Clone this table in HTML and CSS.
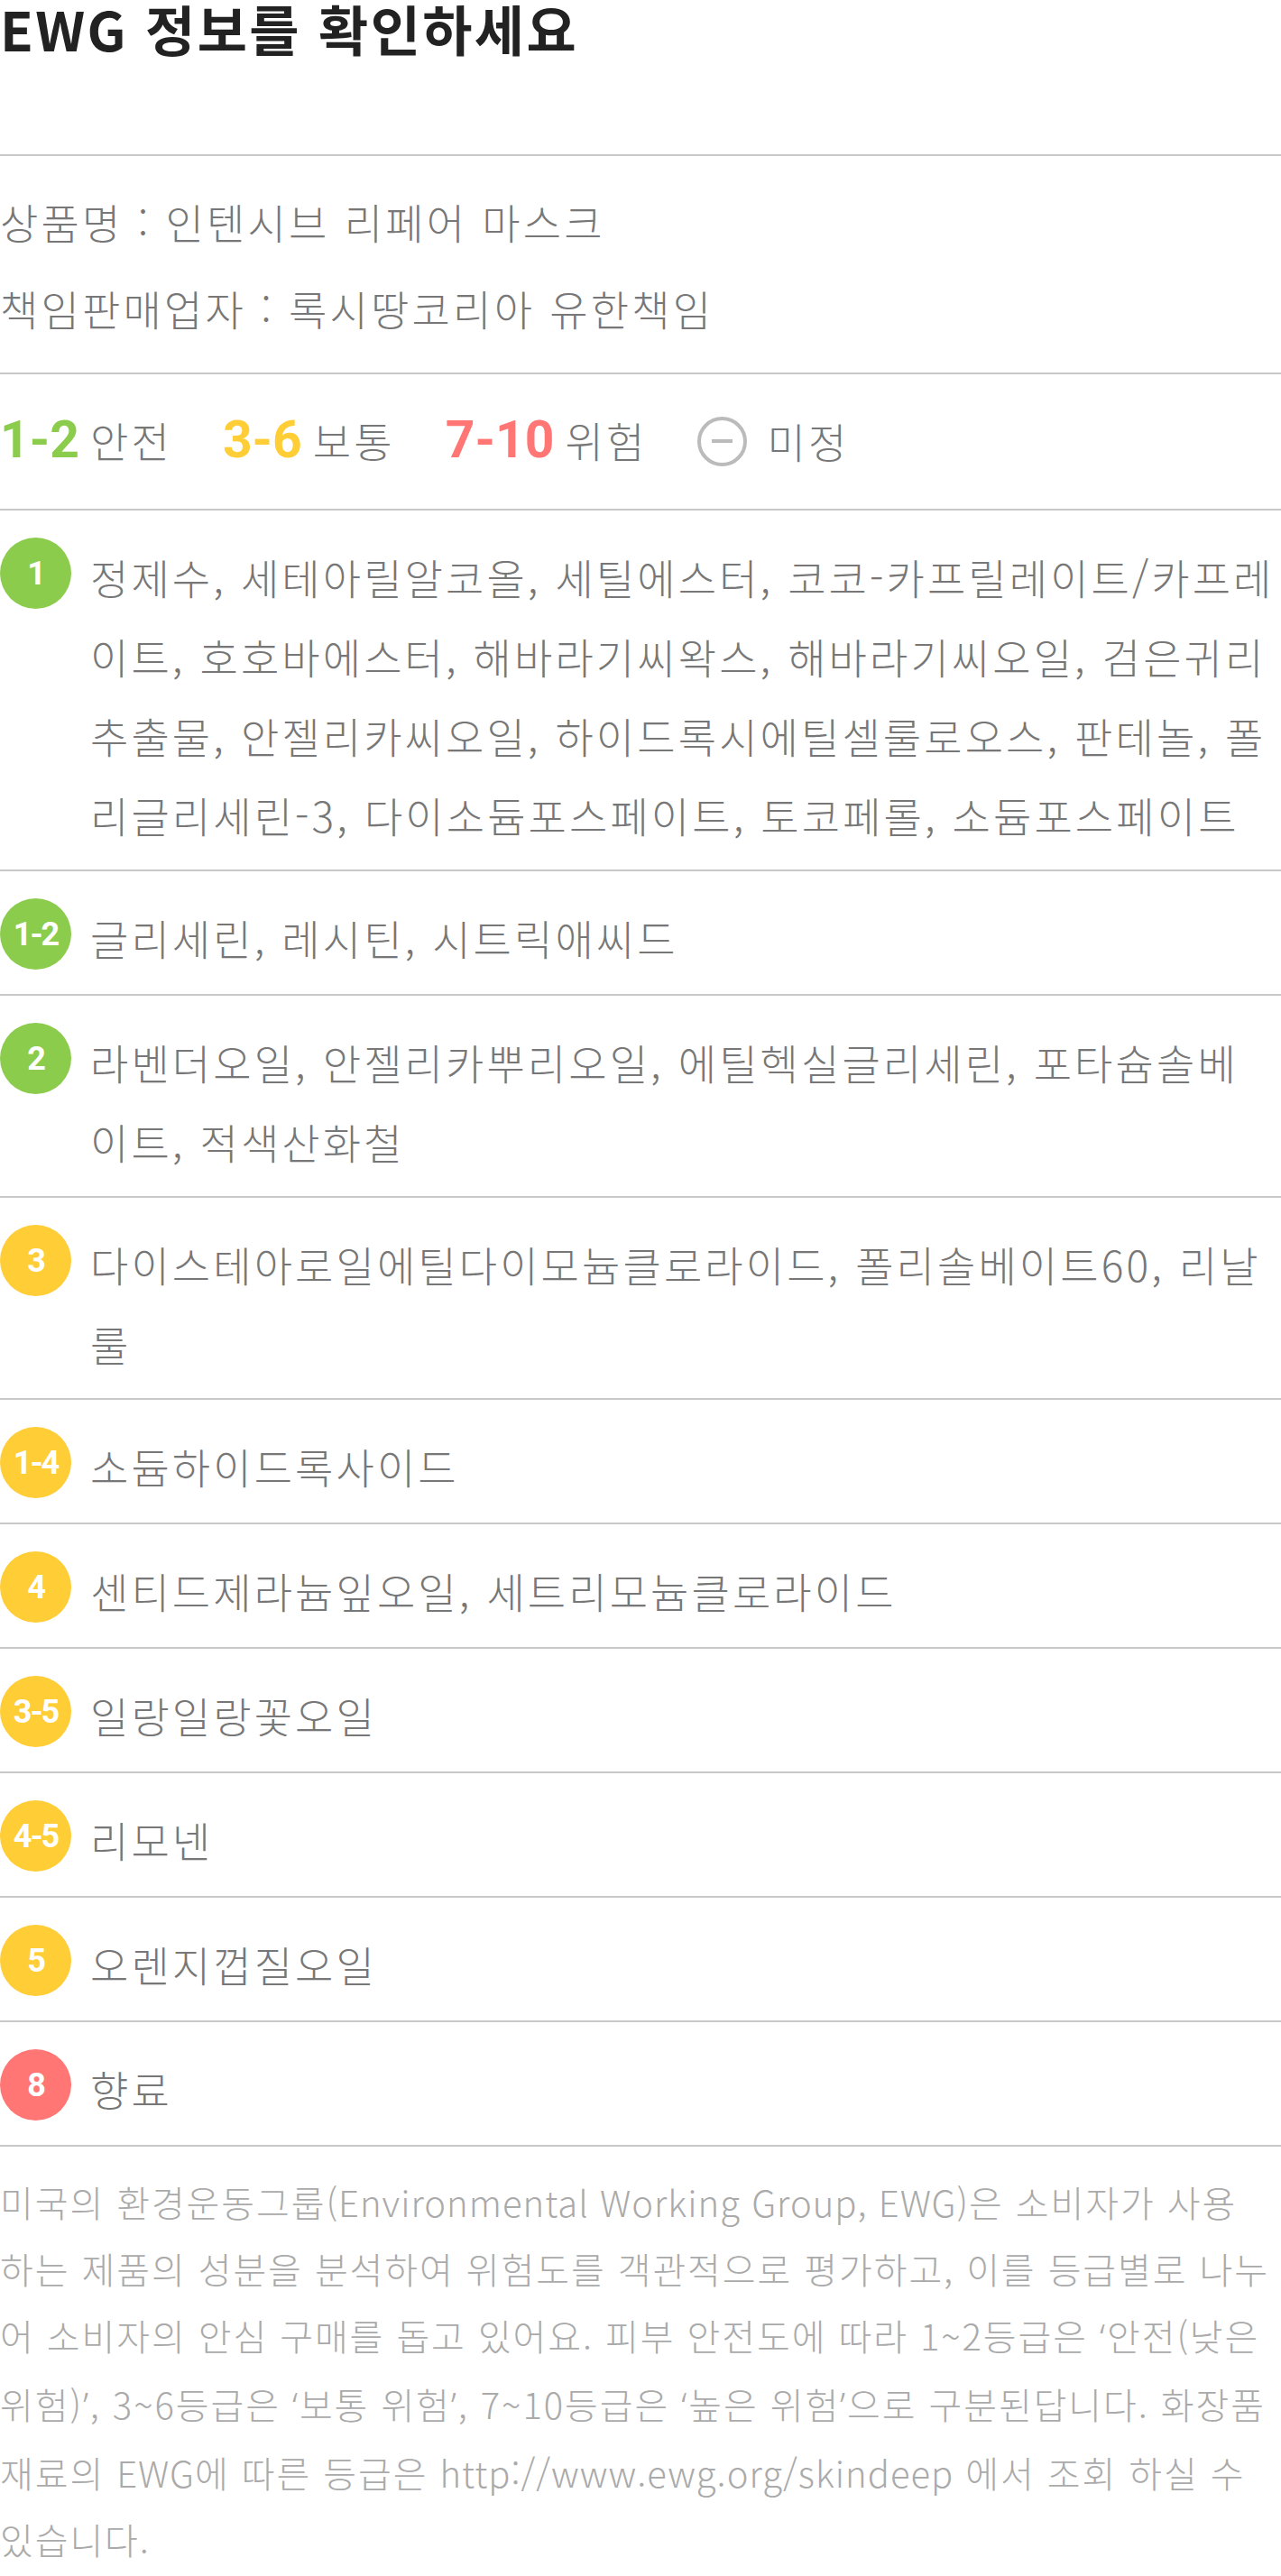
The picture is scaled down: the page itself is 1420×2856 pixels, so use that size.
FILE: index.html
```html
<!DOCTYPE html>
<html lang="ko">
<head>
  <meta charset="UTF-8">
  <meta name="viewport" content="width=device-width, initial-scale=1.0">
  <title>EWG 정보</title>
  <link rel="stylesheet" href="styles.css">
</head>
<body>
  <div class="ewg">
    <!-- 제목 -->
    <div class="ewg-header">
      <h1>EWG 정보를 확인하세요</h1>
    </div>

    <!-- 상품 정보 -->
    <div class="product-info">
      <p>상품명 : 인텐시브 리페어 마스크</p>
      <p>책임판매업자 : 록시땅코리아 유한책임</p>
    </div>

    <!-- 등급 안내 -->
    <div class="legend">
      <div class="legend-item"><span class="legend-num green">1-2</span><span>안전</span></div>
      <div class="legend-item"><span class="legend-num yellow">3-6</span><span>보통</span></div>
      <div class="legend-item"><span class="legend-num red">7-10</span><span>위험</span></div>
      <div class="legend-item"><span class="legend-none"></span><span>미정</span></div>
    </div>

    <!-- 성분 목록 (줄바꿈은 화면 그대로) -->
    <ul class="ingredients">
      <li class="ingredient">
        <span class="badge green">1</span>
        <p>정제수, 세테아릴알코올, 세틸에스터, 코코-카프릴레이트/카프레<br>이트, 호호바에스터, 해바라기씨왁스, 해바라기씨오일, 검은귀리<br>추출물, 안젤리카씨오일, 하이드록시에틸셀룰로오스, 판테놀, 폴<br>리글리세린-3, 다이소듐포스페이트, 토코페롤, 소듐포스페이트</p>
      </li>
      <li class="ingredient">
        <span class="badge green">1-2</span>
        <p>글리세린, 레시틴, 시트릭애씨드</p>
      </li>
      <li class="ingredient">
        <span class="badge green">2</span>
        <p>라벤더오일, 안젤리카뿌리오일, 에틸헥실글리세린, 포타슘솔베<br>이트, 적색산화철</p>
      </li>
      <li class="ingredient">
        <span class="badge yellow">3</span>
        <p>다이스테아로일에틸다이모늄클로라이드, 폴리솔베이트60, 리날<br>룰</p>
      </li>
      <li class="ingredient">
        <span class="badge yellow">1-4</span>
        <p>소듐하이드록사이드</p>
      </li>
      <li class="ingredient">
        <span class="badge yellow">4</span>
        <p>센티드제라늄잎오일, 세트리모늄클로라이드</p>
      </li>
      <li class="ingredient">
        <span class="badge yellow">3-5</span>
        <p>일랑일랑꽃오일</p>
      </li>
      <li class="ingredient">
        <span class="badge yellow">4-5</span>
        <p>리모넨</p>
      </li>
      <li class="ingredient">
        <span class="badge yellow">5</span>
        <p>오렌지껍질오일</p>
      </li>
      <li class="ingredient">
        <span class="badge red">8</span>
        <p>향료</p>
      </li>
    </ul>

    <!-- 안내 문구 -->
    <p class="ewg-note">미국의 환경운동그룹<span class="en">(Environmental Working Group, EWG)</span>은 소비자가 사용<br>하는 제품의 성분을 분석하여 위험도를 객관적으로 평가하고, 이를 등급별로 나누<br>어 소비자의 안심 구매를 돕고 있어요. 피부 안전도에 따라 1~2등급은 <span class="q">‘</span>안전(낮은<br>위험)<span class="q">’</span>, 3~6등급은 <span class="q">‘</span>보통 위험<span class="q">’</span>, 7~10등급은 <span class="q">‘</span>높은 위험<span class="q">’</span>으로 구분된답니다. 화장품<br>재료의 <span class="en">EWG</span>에 따른 등급은 <span class="en">http://www.ewg.org/skindeep</span> 에서 조회 하실 수<br>있습니다.</p>
  </div>
</body>
</html>
```

FILE: styles.css
```css
body {
  margin: 0;
  padding: 0;
  background-color: #fff;
  font-family: "Noto Sans CJK KR", "Noto Sans", sans-serif;
  color: #777;
}

.ewg {
  width: 1420px;
}

.ewg-header {
  padding-bottom: 109px;
  border-bottom: 2px solid #c8c8c8;
}

.ewg-header h1 {
  margin: 0;
  font-size: 60px;
  line-height: 62px;
  font-weight: 700;
  letter-spacing: 2.4px;
  color: #222;
}

.product-info {
  padding: 24px 0;
  border-bottom: 2px solid #c8c8c8;
}

.product-info p {
  margin: 0;
  font-size: 46px;
  line-height: 96px;
  font-weight: 300;
  letter-spacing: 3.2px;
}

.legend {
  display: flex;
  align-items: center;
  gap: 56px;
  padding: 28px 0 32px;
  border-bottom: 2px solid #c8c8c8;
  font-size: 46px;
  line-height: 88px;
  font-weight: 300;
  letter-spacing: 3.2px;
}

.legend-item {
  display: flex;
  align-items: baseline;
}

.legend-num {
  margin-right: 12px;
  font-family: Roboto, sans-serif;
  font-size: 57px;
  font-weight: 700;
  letter-spacing: 0;
}

.legend-none {
  position: relative;
  align-self: center;
  box-sizing: border-box;
  width: 55px;
  height: 55px;
  margin: 4px 22px 0 0;
  border: 4px solid #bbb;
  border-radius: 50%;
}

.legend-none::after {
  content: "";
  position: absolute;
  left: 12px;
  top: 21px;
  width: 23px;
  height: 4px;
  background-color: #bbb;
}

.green { color: #8ccc4d; }
.yellow { color: #ffcd35; }
.red { color: #ff7675; }

.ingredients {
  list-style: none;
  margin: 0;
  padding: 0;
}

.ingredient {
  display: flex;
  align-items: flex-start;
  gap: 21px;
  padding: 29px 0 17px;
  border-bottom: 2px solid #c8c8c8;
}

.ingredient p {
  flex: 1;
  margin: 0;
  font-size: 46px;
  line-height: 88px;
  font-weight: 300;
  letter-spacing: 3.1px;
}

.badge {
  flex: none;
  display: flex;
  align-items: center;
  justify-content: center;
  width: 79px;
  height: 79px;
  margin: 1px 0 10px;
  border-radius: 50%;
  font-family: Roboto, sans-serif;
  font-size: 36px;
  font-weight: 700;
  letter-spacing: -2px;
  color: #fff;
}

.badge.green { background-color: #8ccc4d; }
.badge.yellow { background-color: #ffcd35; }
.badge.red { background-color: #ff7675; }

.ewg-note {
  margin: 0;
  padding: 24px 0 4px;
  font-size: 40px;
  line-height: 74px;
  font-weight: 300;
  letter-spacing: 1.9px;
  color: #aaa;
}

.ewg-note .en {
  letter-spacing: 1px;
}

.ewg-note .q {
  font-family: "Noto Sans", sans-serif;
}
```
